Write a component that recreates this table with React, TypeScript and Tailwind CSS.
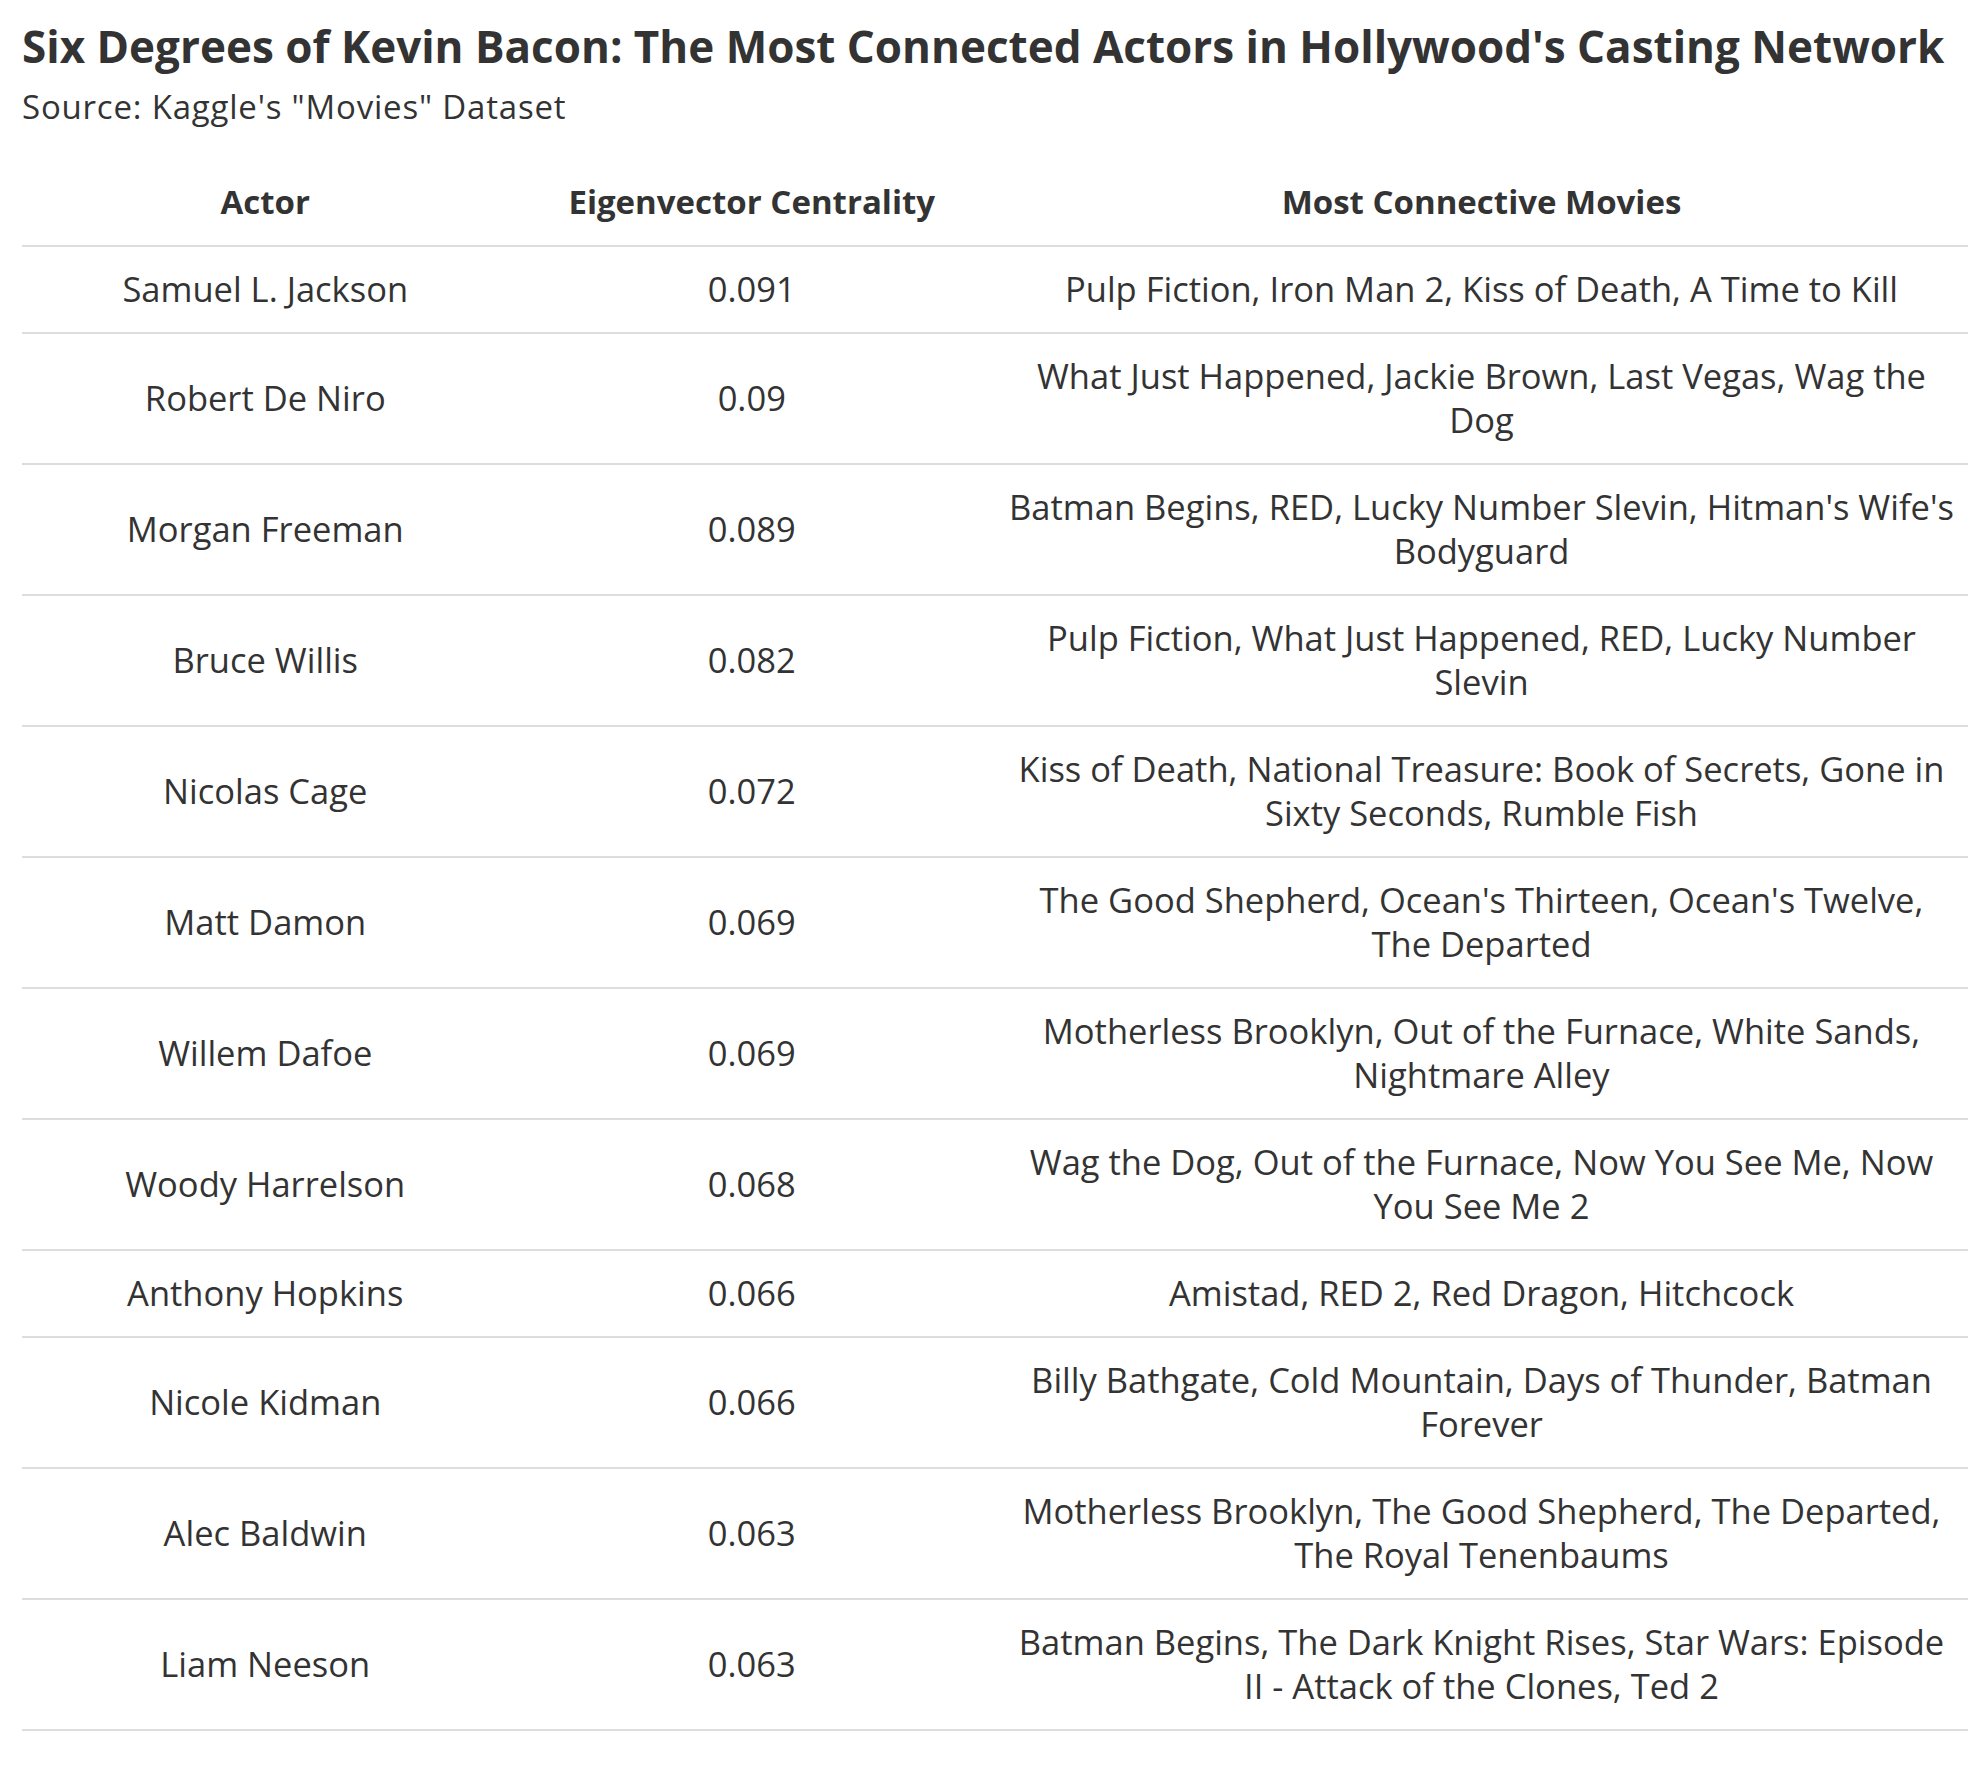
const rows: { actor: string; score: string; movies: string[] }[] = [
  { actor: "Samuel L. Jackson", score: "0.091", movies: ["Pulp Fiction, Iron Man 2, Kiss of Death, A Time to Kill"] },
  { actor: "Robert De Niro", score: "0.09", movies: ["What Just Happened, Jackie Brown, Last Vegas, Wag the", "Dog"] },
  { actor: "Morgan Freeman", score: "0.089", movies: ["Batman Begins, RED, Lucky Number Slevin, Hitman's Wife's", "Bodyguard"] },
  { actor: "Bruce Willis", score: "0.082", movies: ["Pulp Fiction, What Just Happened, RED, Lucky Number", "Slevin"] },
  { actor: "Nicolas Cage", score: "0.072", movies: ["Kiss of Death, National Treasure: Book of Secrets, Gone in", "Sixty Seconds, Rumble Fish"] },
  { actor: "Matt Damon", score: "0.069", movies: ["The Good Shepherd, Ocean's Thirteen, Ocean's Twelve,", "The Departed"] },
  { actor: "Willem Dafoe", score: "0.069", movies: ["Motherless Brooklyn, Out of the Furnace, White Sands,", "Nightmare Alley"] },
  { actor: "Woody Harrelson", score: "0.068", movies: ["Wag the Dog, Out of the Furnace, Now You See Me, Now", "You See Me 2"] },
  { actor: "Anthony Hopkins", score: "0.066", movies: ["Amistad, RED 2, Red Dragon, Hitchcock"] },
  { actor: "Nicole Kidman", score: "0.066", movies: ["Billy Bathgate, Cold Mountain, Days of Thunder, Batman", "Forever"] },
  { actor: "Alec Baldwin", score: "0.063", movies: ["Motherless Brooklyn, The Good Shepherd, The Departed,", "The Royal Tenenbaums"] },
  { actor: "Liam Neeson", score: "0.063", movies: ["Batman Begins, The Dark Knight Rises, Star Wars: Episode", "II - Attack of the Clones, Ted 2"] },
];

export default function App() {
  return (
    <div className="min-h-screen bg-white px-[22px] pt-[20px] pb-16 font-['Open_Sans',sans-serif] text-[#333]">
      <h1 className="text-[44px] font-bold leading-[1.2]">
        Six Degrees of Kevin Bacon: The Most Connected Actors in Hollywood's Casting Network
      </h1>
      <p className="mt-[14.5px] text-[33px] leading-[1.2] tracking-[0.8px]">Source: Kaggle's "Movies" Dataset</p>

      <table className="mt-[33px] w-[1946px] table-fixed border-collapse text-center">
        <colgroup>
          <col className="w-1/4" />
          <col className="w-1/4" />
          <col className="w-1/2" />
        </colgroup>
        <thead>
          <tr className="border-b-2 border-[#ddd] text-[33px] font-bold leading-[44px]">
            <th className="px-3 py-[20.5px]">Actor</th>
            <th className="px-3 py-[20.5px]">Eigenvector Centrality</th>
            <th className="px-3 py-[20.5px]">Most Connective Movies</th>
          </tr>
        </thead>
        <tbody className="text-[34.5px] leading-[44px]">
          {rows.map((r) => (
            <tr key={r.actor} className="border-b-2 border-[#ddd]">
              <td className="px-3 py-[20.5px]">{r.actor}</td>
              <td className="px-3 py-[20.5px]">{r.score}</td>
              <td className="px-3 py-[20.5px]">
                {r.movies.map((line) => (
                  <div key={line} className="whitespace-nowrap">
                    {line}
                  </div>
                ))}
              </td>
            </tr>
          ))}
        </tbody>
      </table>
    </div>
  );
}
